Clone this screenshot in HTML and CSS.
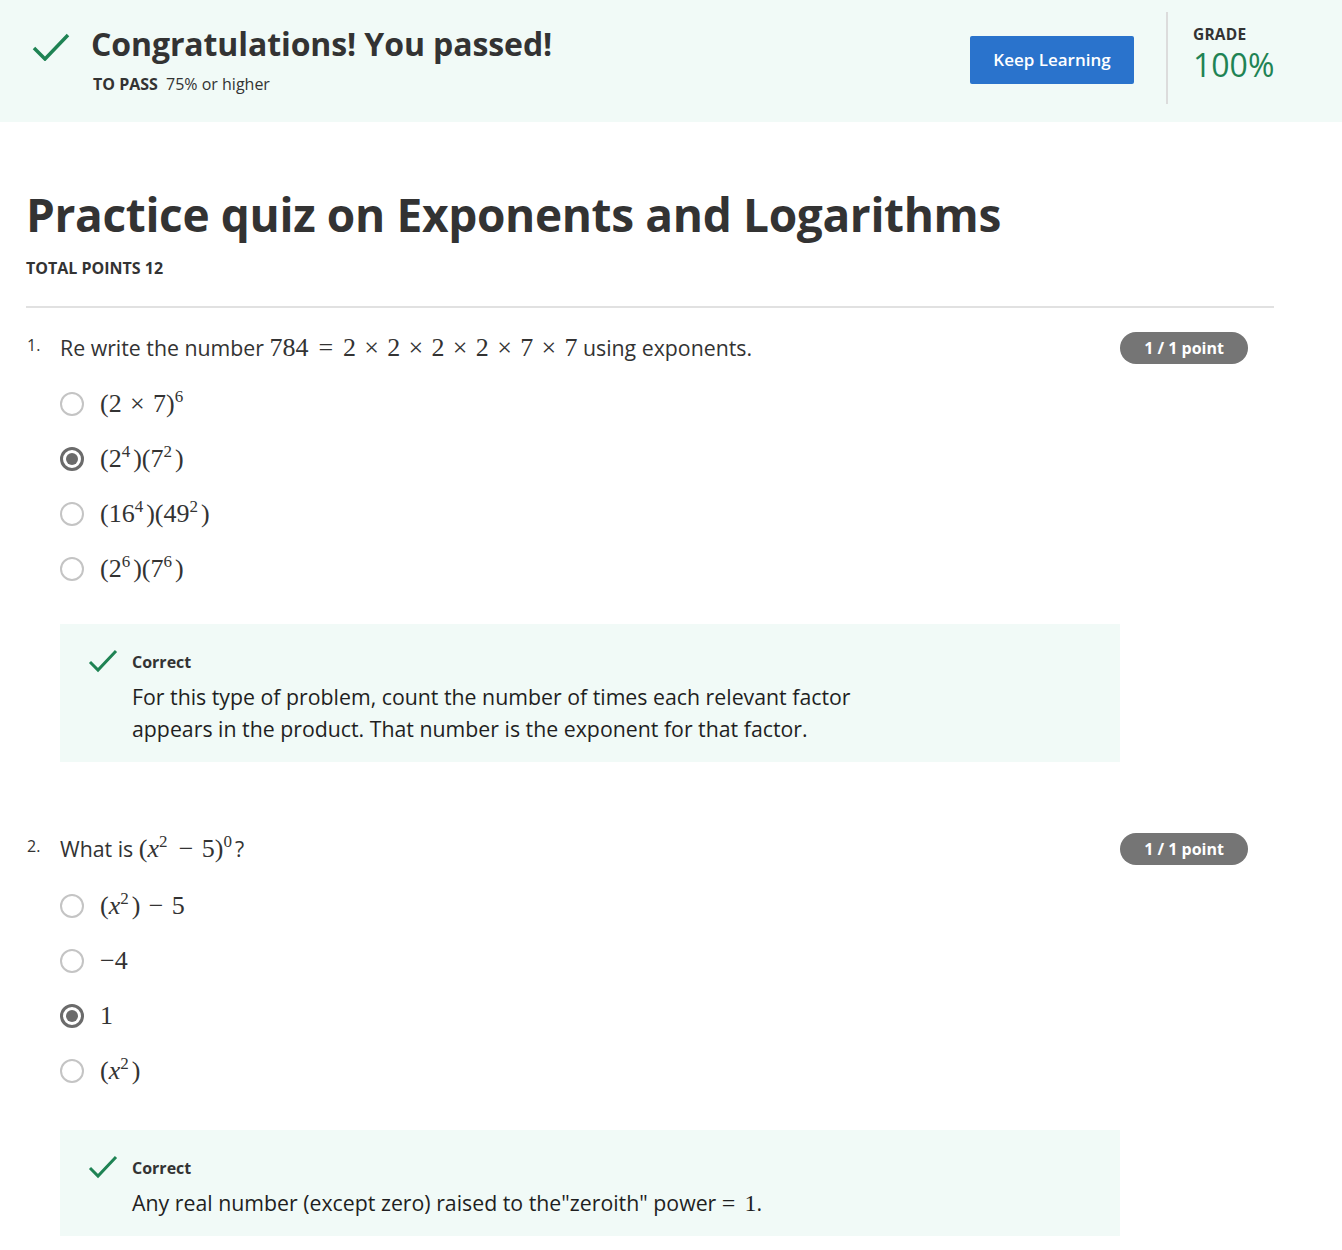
FILE: index.html
```html
<!DOCTYPE html>
<html>
<head>
<meta charset="utf-8">
<link rel="stylesheet" href="styles.css">
</head>
<body>
<header class="banner">
  <div class="banner-main">
    <svg class="big-check" width="38" height="28" viewBox="0 0 38 28"><path d="M2 15 L13 26 L36 2" fill="none" stroke="#1f8354" stroke-width="3.5"/></svg>
    <div class="banner-text">
      <h1 class="banner-title">Congratulations! You passed!</h1>
      <div class="banner-sub"><span class="label">TO PASS</span> 75% or higher</div>
    </div>
  </div>
  <button class="keep">Keep Learning</button>
  <div class="divider"></div>
  <div class="grade">
    <div class="grade-label">GRADE</div>
    <div class="grade-value">100%</div>
  </div>
</header>

<main class="content">
  <h2 class="quiz-title">Practice quiz on Exponents and Logarithms</h2>
  <div class="total">TOTAL POINTS 12</div>
  <hr class="rule">

  <section class="question q1">
    <div class="q-head">
      <span class="q-num">1.</span>
      <div class="q-text">Re write the number <span class="m">784<span class="rel">=</span>2<span class="op">×</span>2<span class="op">×</span>2<span class="op">×</span>2<span class="op">×</span>7<span class="op">×</span>7</span> using exponents.</div>
      <span class="badge">1 / 1 point</span>
    </div>
    <ul class="options">
      <li><span class="radio"></span><span class="m opt">(2<span class="op">×</span>7)<sup>6</sup></span></li>
      <li><span class="radio checked"></span><span class="m opt">(2<sup class="g">4</sup>)(7<sup class="g">2</sup>)</span></li>
      <li><span class="radio"></span><span class="m opt">(16<sup class="g">4</sup>)(49<sup class="g">2</sup>)</span></li>
      <li><span class="radio"></span><span class="m opt">(2<sup class="g">6</sup>)(7<sup class="g">6</sup>)</span></li>
    </ul>
    <div class="feedback">
      <svg class="small-check" width="30" height="24" viewBox="0 0 30 24"><path d="M2 13 L10 21 L28 2" fill="none" stroke="#1f8354" stroke-width="3"/></svg>
      <div class="fb-body">
        <div class="fb-title">Correct</div>
        <p class="fb-text">For this type of problem, count the number of times each relevant factor<br>appears in the product. That number is the exponent for that factor.</p>
      </div>
    </div>
  </section>

  <section class="question q2">
    <div class="q-head">
      <span class="q-num">2.</span>
      <div class="q-text">What is <span class="m">(<i>x</i><sup class="g">2</sup><span class="op">−</span>5)<sup class="g">0</sup></span>?</div>
      <span class="badge">1 / 1 point</span>
    </div>
    <ul class="options">
      <li><span class="radio"></span><span class="m opt">(<i>x</i><sup class="g">2</sup>)<span class="op">−</span>5</span></li>
      <li><span class="radio"></span><span class="m opt">−4</span></li>
      <li><span class="radio checked"></span><span class="m opt">1</span></li>
      <li><span class="radio"></span><span class="m opt">(<i>x</i><sup class="g">2</sup>)</span></li>
    </ul>
    <div class="feedback">
      <svg class="small-check" width="30" height="24" viewBox="0 0 30 24"><path d="M2 13 L10 21 L28 2" fill="none" stroke="#1f8354" stroke-width="3"/></svg>
      <div class="fb-body">
        <div class="fb-title">Correct</div>
        <p class="fb-text">Any real number (except zero) raised to the"zeroith" power <span class="m"><span class="rel first">=</span>1</span>.</p>
      </div>
    </div>
  </section>
</main>
</body>
</html>
```
FILE: styles.css
```css
* { box-sizing: border-box; }
html, body { margin: 0; padding: 0; background: #fff; }
body {
  font-family: "Open Sans", "Noto Sans", sans-serif;
  color: #1f1f1f;
  width: 1342px;
  height: 1250px;
  overflow: hidden;
}
.banner {
  background: #f1faf7;
  height: 122px;
  display: flex;
  align-items: flex-start;
  padding: 12px 0 0 32px;
}
.banner-main {
  display: flex;
  align-items: flex-start;
  flex: 1;
  padding-top: 18px;
}
.big-check { margin-top: 3px; margin-right: 21px; }
.banner-title {
  margin: 0;
  font-size: 32px;
  font-weight: 700;
  line-height: 28px;
  color: #333;
  letter-spacing: -0.1px;
}
.banner-sub {
  margin-top: 15px;
  font-size: 16px;
  color: #333;
  line-height: 22px;
  padding-left: 2px;
}
.banner-sub .label { font-weight: 700; margin-right: 4px; }
.keep {
  margin-top: 24px;
  width: 164px;
  height: 48px;
  background: #2a73cc;
  color: #fff;
  border: 0;
  border-radius: 2px;
  font-family: "Open Sans", sans-serif;
  font-size: 17px;
  font-weight: 600;
  padding: 0 0 2px 0;
}
.divider {
  width: 2px;
  height: 92px;
  background: #dcdcdc;
  margin: 0 0 0 32px;
}
.grade {
  width: 174px;
  padding: 12px 0 0 25px;
}
.grade-label {
  font-size: 15.5px;
  font-weight: 700;
  color: #333;
  line-height: 20px;
  letter-spacing: 0.2px;
}
.grade-value {
  margin-top: 2px;
  font-size: 32px;
  color: #1f8354;
  line-height: 38px;
  font-weight: 400;
}
.content {
  padding: 0 68px 0 26px;
}
.quiz-title {
  margin: 66px 0 0 0;
  font-size: 46px;
  font-weight: 700;
  line-height: 52px;
  color: #333;
  letter-spacing: -0.35px;
}
.total {
  margin-top: 18px;
  font-size: 16px;
  font-weight: 700;
  color: #333;
  line-height: 20px;
}
.rule {
  margin: 28px 0 0 0;
  border: 0;
  border-top: 2px solid #e1e1e1;
}
.question { padding-right: 26px; }
.question.q1 { margin-top: 23px; }
.question.q2 { margin-top: 70px; }
.q-head {
  display: flex;
  align-items: center;
  height: 34px;
}
.q-num {
  width: 34px;
  font-size: 16px;
  color: #333;
  padding-left: 1px;
  align-self: flex-start;
  padding-top: 3px;
}
.q-text {
  flex: 1;
  font-size: 21.3px;
  color: #333;
  white-space: nowrap;
}
.m {
  font-family: "Liberation Serif", "DejaVu Serif", serif;
  font-size: 26px;
}
.m sup { font-size: 17px; vertical-align: 10px; line-height: 0; }
.m sup.g { margin-right: 3px; }
.m i { font-style: italic; }
.op { margin: 0 0.32em; }
.rel { margin: 0 0.38em; }
.rel.first { margin-left: 0; }
.badge {
  background: #757575;
  color: #fff;
  font-weight: 700;
  font-size: 16px;
  height: 32px;
  line-height: 32px;
  width: 128px;
  text-align: center;
  border-radius: 16px;
}
.options {
  list-style: none;
  margin: 11px 0 0 34px;
  padding: 0;
}
.q2 .options { margin-top: 12px; }
.options li {
  display: flex;
  align-items: center;
  height: 55px;
}
.radio {
  width: 24px;
  height: 24px;
  border-radius: 50%;
  border: 2px solid #c4c4c4;
  margin-right: 16px;
  flex: none;
  display: flex;
  align-items: center;
  justify-content: center;
}
.radio.checked { border: 3px solid #6b6b6b; }
.radio.checked::after {
  content: "";
  width: 12px;
  height: 12px;
  border-radius: 50%;
  background: #6b6b6b;
}
.opt { color: #333; }
.feedback {
  margin: 28px 0 0 34px;
  width: 1060px;
  background: #f1faf7;
  display: flex;
  align-items: flex-start;
  padding: 25px 20px 17px 28px;
}
.q2 .feedback { margin-top: 32px; }
.small-check { margin-right: 14px; margin-top: 0; }
.fb-title {
  font-size: 16px;
  font-weight: 700;
  color: #333;
  line-height: 26px;
}
.fb-text {
  margin: 6px 0 0 0;
  font-size: 21.3px;
  line-height: 32px;
  color: #1f1f1f;
}
.fb-text .m { font-size: 24px; }
```
